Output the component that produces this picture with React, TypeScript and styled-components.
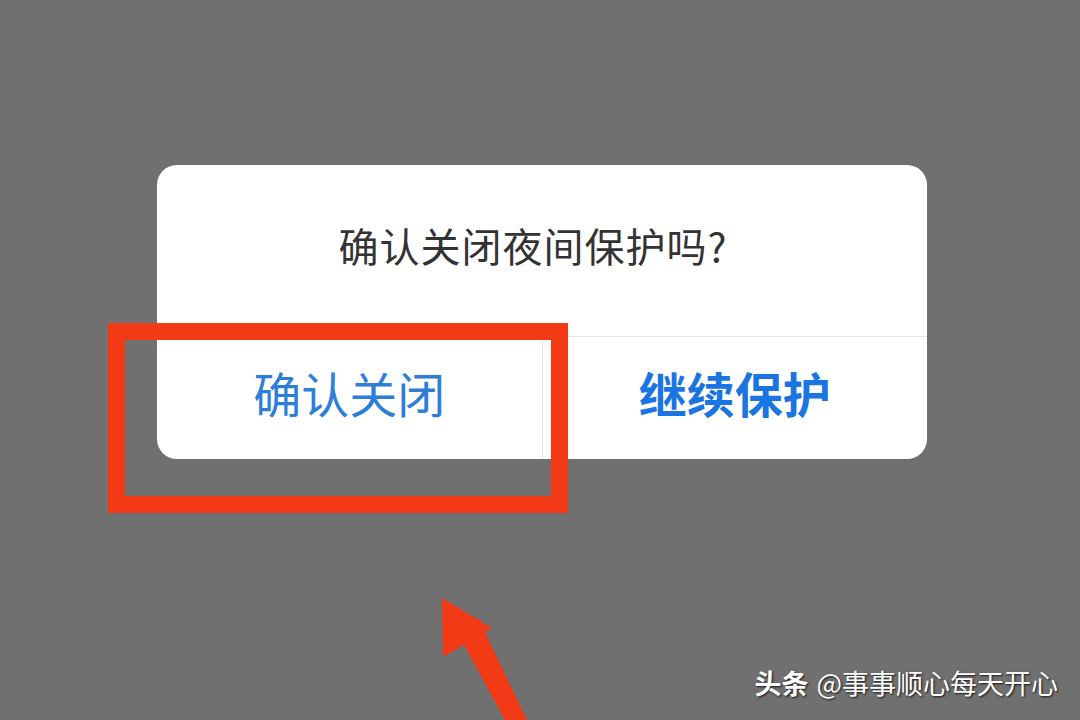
import React from 'react';
import styled, { createGlobalStyle } from 'styled-components';

const GlobalStyle = createGlobalStyle`
  html, body {
    margin: 0;
    padding: 0;
    background: #707070;
  }
  body {
    font-family: "Noto Sans CJK SC", "Noto Sans", sans-serif;
  }
`;

const Screen = styled.div`
  position: relative;
  width: 1080px;
  height: 720px;
  overflow: hidden;
  background: #707070;
  padding-top: 165px;
  box-sizing: border-box;
`;

const Dialog = styled.div`
  width: 770px;
  height: 294px;
  margin-left: 157px;
  background: #ffffff;
  border-radius: 20px;
  display: flex;
  flex-direction: column;
  overflow: hidden;
`;

const Message = styled.div`
  height: 172px;
  display: flex;
  align-items: center;
  justify-content: center;
  padding: 0 18px 12px 0;
  box-sizing: border-box;
  font-size: 40px;
  letter-spacing: 1px;
  color: #333333;
  border-bottom: 1px solid #e6e6e6;
`;

const Actions = styled.div`
  flex: 1;
  display: flex;
`;

const Action = styled.div<{ $strong?: boolean }>`
  flex: 1;
  display: flex;
  align-items: center;
  justify-content: center;
  padding-bottom: 12px;
  font-size: 48px;
  font-weight: ${(p) => (p.$strong ? 700 : 400)};
  color: ${(p) => (p.$strong ? '#1a74e2' : '#2d7ed8')};
  & + & {
    border-left: 1px solid #e6e6e6;
  }
`;

const Highlight = styled.div`
  position: absolute;
  left: 108px;
  top: 323px;
  width: 460px;
  height: 190px;
  border: 17px solid #f23a16;
  box-sizing: border-box;
`;

const Arrow = styled.svg`
  position: absolute;
  left: 0;
  top: 0;
  pointer-events: none;
`;

const Watermark = styled.div`
  position: absolute;
  right: 22px;
  bottom: 18px;
  display: flex;
  gap: 8px;
  align-items: baseline;
  font-size: 27px;
  color: #ffffff;
  text-shadow: 1px 1px 2px rgba(0, 0, 0, 0.8);
`;

const Brand = styled.span`
  font-weight: 700;
`;

export default function App() {
  return (
    <>
      <GlobalStyle />
      <Screen>
        <Dialog>
          <Message>确认关闭夜间保护吗?</Message>
          <Actions>
            <Action>确认关闭</Action>
            <Action $strong>继续保护</Action>
          </Actions>
        </Dialog>
        <Highlight />
        <Arrow width="1080" height="720" viewBox="0 0 1080 720">
          <polygon points="442,598 443,657 492,628" fill="#f23a16" />
          <polygon points="456,630 478,618 527,720 505,720" fill="#f23a16" />
        </Arrow>
        <Watermark>
          <Brand>头条</Brand>
          <span>@事事顺心每天开心</span>
        </Watermark>
      </Screen>
    </>
  );
}
